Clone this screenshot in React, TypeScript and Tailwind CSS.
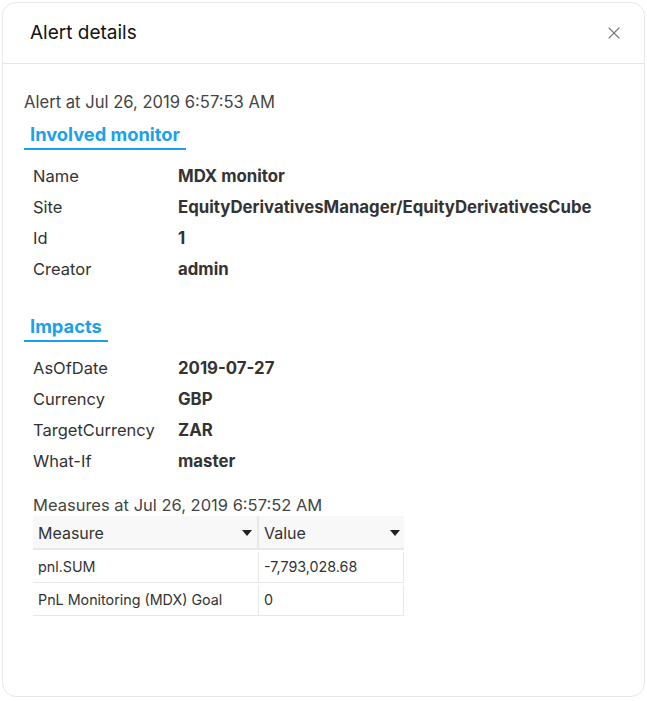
import { X } from 'lucide-react'

const monitor = [
  ['Name', 'MDX monitor'],
  ['Site', 'EquityDerivativesManager/EquityDerivativesCube'],
  ['Id', '1'],
  ['Creator', 'admin'],
]

const impacts = [
  ['AsOfDate', '2019-07-27'],
  ['Currency', 'GBP'],
  ['TargetCurrency', 'ZAR'],
  ['What-If', 'master'],
]

const measures = [
  ['pnl.SUM', '-7,793,028.68'],
  ['PnL Monitoring (MDX) Goal', '0'],
]

function SectionTitle({ title }: { title: string }) {
  return (
    <div className="inline-block border-b-2 border-[#1ba1ec] px-[6px] pb-[2px] text-[18.3px] font-bold leading-[24px] text-[#1ba1ec]">
      {title}
    </div>
  )
}

function Props({ rows }: { rows: string[][] }) {
  return (
    <div className="mt-[11px] flex flex-col pl-[9px]">
      {rows.map(([k, v]) => (
        <div key={k} className="flex h-[31px] items-center text-[16.5px]">
          <div className="w-[145px] text-[#333]">{k}</div>
          <div className="text-[16.8px] font-bold text-[#333]">{v}</div>
        </div>
      ))}
    </div>
  )
}

function Caret() {
  return <span className="h-0 w-0 border-x-[5px] border-t-[6px] border-x-transparent border-t-[#222]" />
}

export default function App() {
  return (
    <div className="min-h-screen bg-white p-[2px]" style={{ fontFamily: 'Inter, "Noto Sans", sans-serif' }}>
      <div className="flex h-[695px] flex-col rounded-[14px] border border-[#e8e8e8] bg-white">
        <div className="flex h-[61px] items-center justify-between border-b border-[#e6e6e6] pl-[27px] pr-[20px]">
          <h1 className="text-[19px] text-[#111]">Alert details</h1>
          <X className="h-[20px] w-[20px] text-[#777]" strokeWidth={1.3} />
        </div>
        <div className="px-[21px] pt-[28px]">
          <div className="text-[16.6px] leading-[20px] text-[#444]">Alert at Jul 26, 2019 6:57:53 AM</div>
          <div className="mt-[10px]">
            <SectionTitle title="Involved monitor" />
          </div>
          <Props rows={monitor} />
          <div className="mt-[29px]">
            <SectionTitle title="Impacts" />
          </div>
          <Props rows={impacts} />
          <div className="mt-[18px] pl-[9px] text-[16.5px] leading-[20px] text-[#444]">Measures at Jul 26, 2019 6:57:52 AM</div>
          <div className="ml-[9px] mt-[1px] w-[371px] text-[#333]">
            <div className="flex h-[34px] border-b-2 border-[#e8e8e8] bg-[#f8f8f8]">
              <div className="flex w-[226px] items-center justify-between border-r-2 border-[#e8e8e8] pl-[5px] pr-[5px] pt-[2px] text-[16px]">
                <span>Measure</span>
                <Caret />
              </div>
              <div className="flex flex-1 items-center justify-between pl-[5px] pr-[4px] pt-[2px] text-[16px]">
                <span>Value</span>
                <Caret />
              </div>
            </div>
            {measures.map(([m, v]) => (
              <div key={m} className="flex h-[33px] border-b border-[#e8e8e8] pt-[2px] text-[14.3px]">
                <div className="flex w-[226px] items-center border-r border-[#e8e8e8] pl-[5px]">{m}</div>
                <div className="flex flex-1 items-center border-r border-[#e8e8e8] pl-[5px]">{v}</div>
              </div>
            ))}
          </div>
        </div>
      </div>
    </div>
  )
}
